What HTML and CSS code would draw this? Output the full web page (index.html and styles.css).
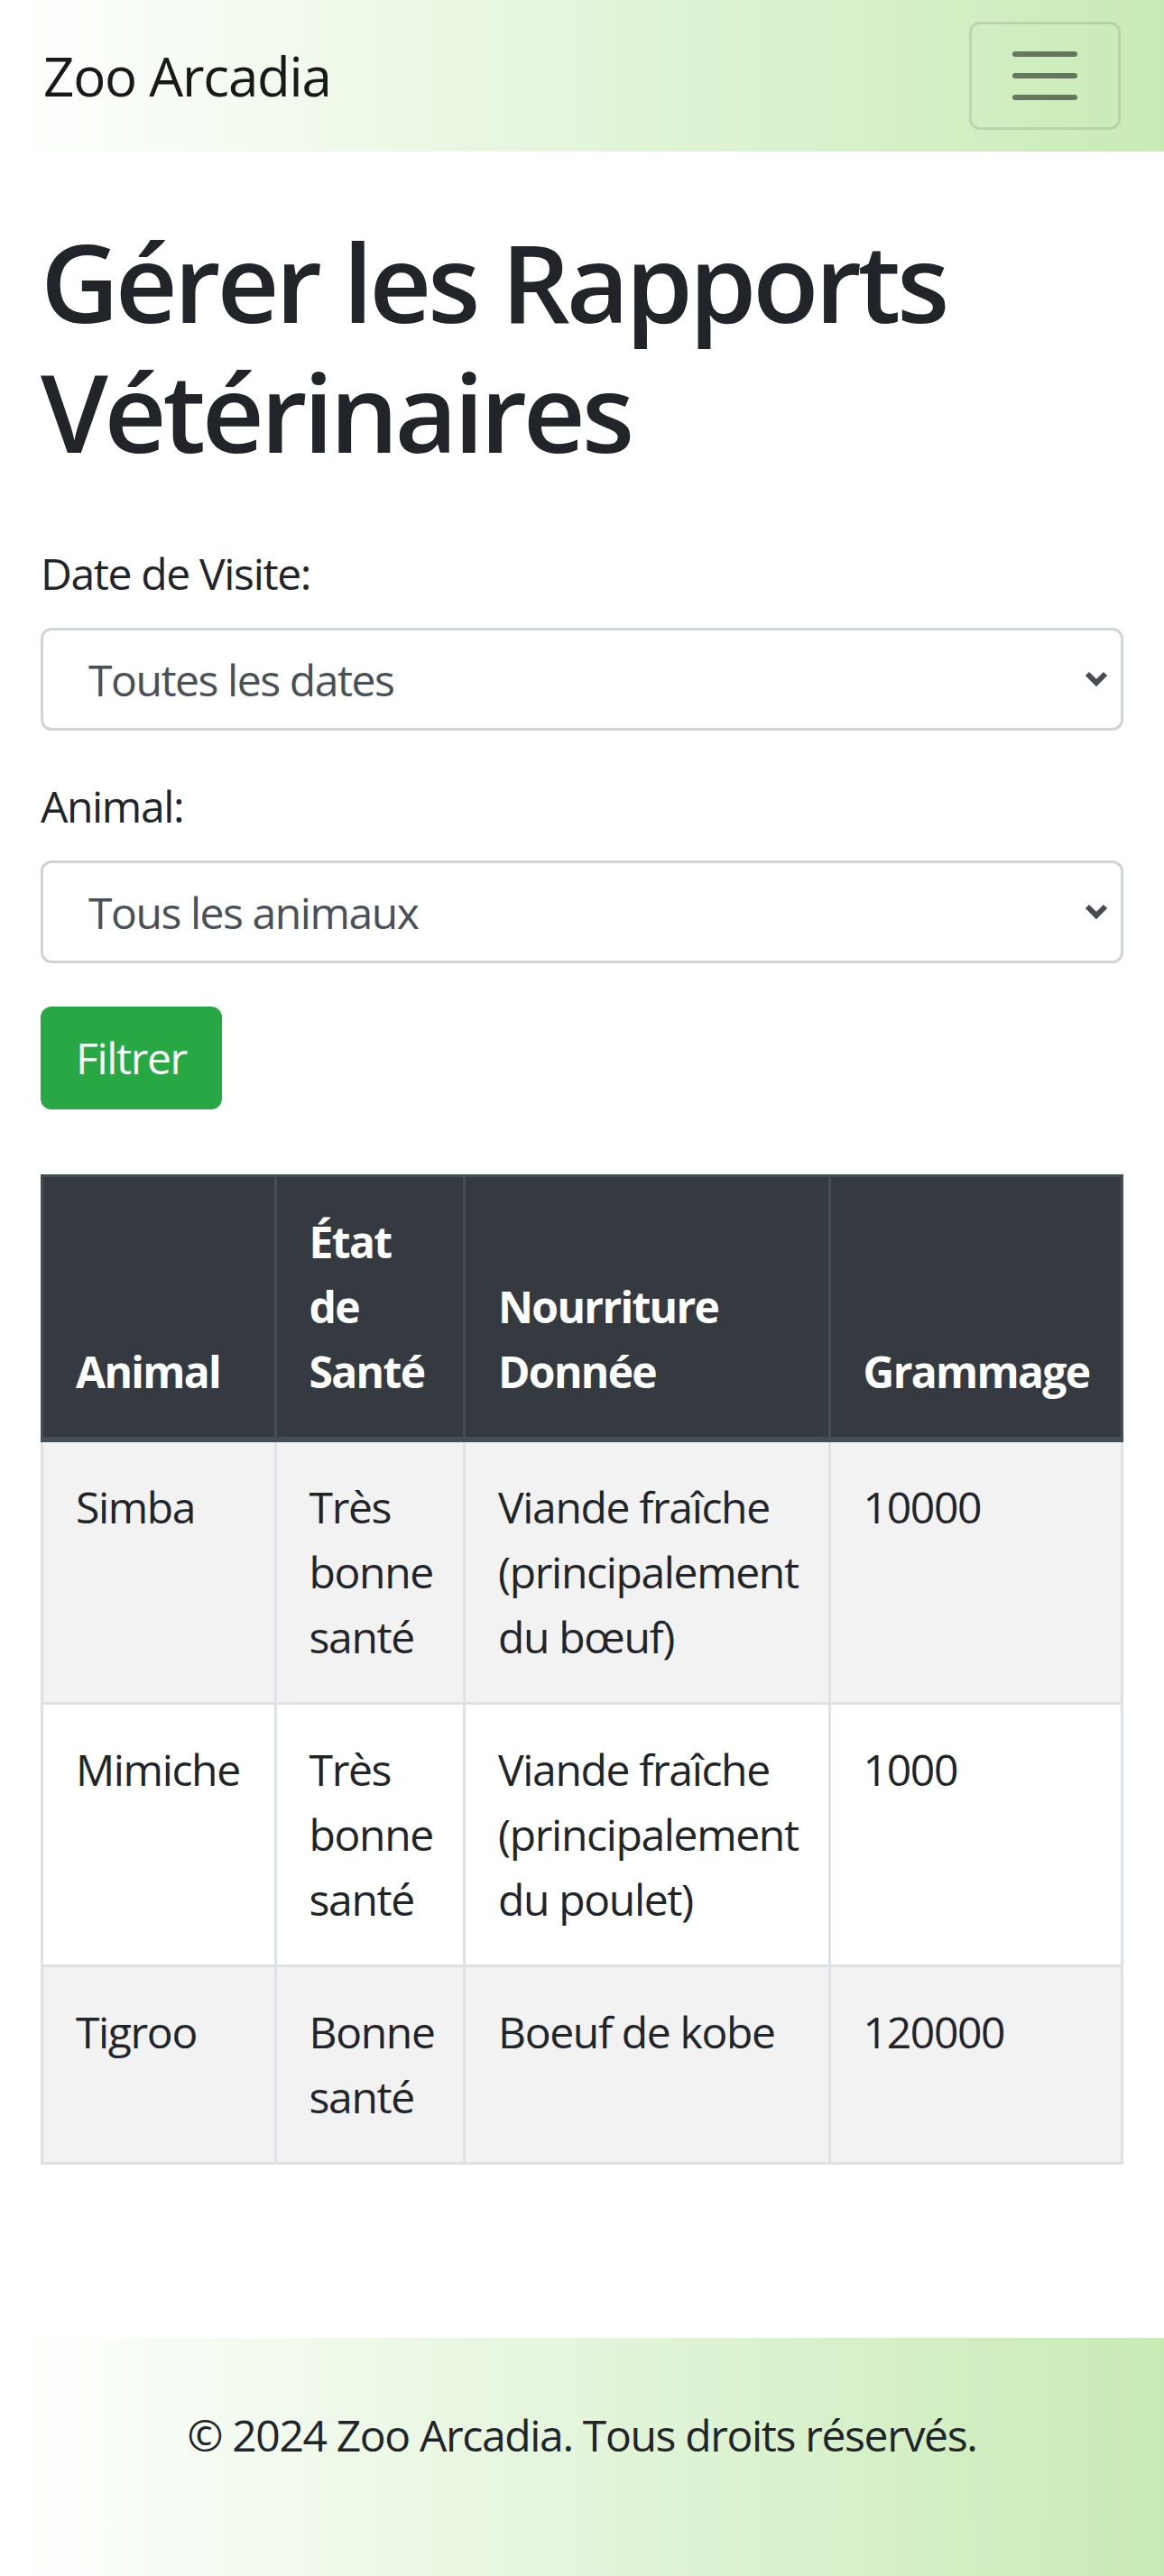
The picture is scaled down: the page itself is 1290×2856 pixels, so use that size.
FILE: index.html
```html
<!DOCTYPE html>
<html lang="fr">
<head>
<meta charset="utf-8">
<title>Gérer les Rapports Vétérinaires - Zoo Arcadia</title>
<link rel="stylesheet" href="styles.css">
</head>
<body>
<nav class="navbar">
  <span class="brand">Zoo Arcadia</span>
  <button class="toggler" type="button" aria-label="Menu">
    <svg class="toggler-icon" viewBox="0 0 30 30" width="90" height="90"><path d="M4 7h22M4 15h22M4 23h22" stroke="rgba(0,0,0,0.5)" stroke-width="2" stroke-linecap="round" fill="none"/></svg>
  </button>
</nav>
<main class="container">
  <h1 class="title">Gérer les Rapports Vétérinaires</h1>
  <form class="filters">
    <div class="form-group">
      <label class="label" for="date">Date de Visite:</label>
      <div class="select-wrap">
        <select id="date" class="select"><option>Toutes les dates</option></select>
        <svg class="chevron" viewBox="0 0 26 18" width="26" height="18"><path d="M3 3l10 10L23 3" stroke="#484c52" stroke-width="6" fill="none"/></svg>
      </div>
    </div>
    <div class="form-group">
      <label class="label" for="animal">Animal:</label>
      <div class="select-wrap">
        <select id="animal" class="select"><option>Tous les animaux</option></select>
        <svg class="chevron" viewBox="0 0 26 18" width="26" height="18"><path d="M3 3l10 10L23 3" stroke="#484c52" stroke-width="6" fill="none"/></svg>
      </div>
    </div>
    <button type="button" class="btn">Filtrer</button>
  </form>
  <table class="table">
    <colgroup>
      <col class="c1"><col class="c2"><col class="c3"><col class="c4">
    </colgroup>
    <thead>
      <tr><th>Animal</th><th>État de Santé</th><th>Nourriture Donnée</th><th>Grammage</th></tr>
    </thead>
    <tbody>
      <tr class="odd"><td>Simba</td><td>Très bonne santé</td><td>Viande fraîche (principalement du bœuf)</td><td>10000</td></tr>
      <tr><td>Mimiche</td><td>Très bonne santé</td><td>Viande fraîche (principalement du poulet)</td><td>1000</td></tr>
      <tr class="odd"><td>Tigroo</td><td>Bonne santé</td><td>Boeuf de kobe</td><td>120000</td></tr>
    </tbody>
  </table>
</main>
<footer class="footer">
  <p class="copy">© 2024 Zoo Arcadia. Tous droits réservés.</p>
</footer>
</body>
</html>
```
FILE: styles.css
```css
* { box-sizing: border-box; }
html, body { margin: 0; padding: 0; }
body {
  font-family: "Open Sans", "Noto Sans", sans-serif;
  font-size: 48px;
  line-height: 1.5;
  letter-spacing: -0.028em;
  color: #212529;
  background: #fff;
}
.navbar {
  display: flex;
  justify-content: space-between;
  align-items: center;
  padding: 24px 48px;
  background: linear-gradient(to right, #ffffff, #c8ebb6);
}
.brand {
  font-size: 60px;
  line-height: 90px;
  padding: 15px 0;
  letter-spacing: -0.02em;
  color: rgba(0,0,0,0.9);
}
.toggler {
  width: 168px;
  height: 120px;
  padding: 12px 36px;
  border: 3px solid rgba(0,0,0,0.1);
  border-radius: 12px;
  background: transparent;
  display: flex;
  align-items: center;
  justify-content: center;
}
.toggler-icon { display: block; }
.container {
  padding: 0 45px 192px;
  margin: 72px 0 0;
}
.title {
  margin: 0 0 72px;
  font-size: 120px;
  line-height: 1.2;
  font-weight: 600;
  letter-spacing: -0.035em;
}
.form-group { margin-bottom: 48px; }
.label {
  display: inline-block;
  margin-bottom: 24px;
}
.select-wrap { position: relative; }
.select {
  display: block;
  width: 100%;
  height: 114px;
  padding: 0 36px 0 50px;
  font-family: inherit;
  font-size: 48px;
  letter-spacing: -0.03em;
  color: #495057;
  background: #fff;
  border: 3px solid #ced4da;
  border-radius: 12px;
  -webkit-appearance: none;
  appearance: none;
}
.chevron {
  position: absolute;
  right: 17px;
  top: 48px;
}
.btn {
  display: inline-block;
  font-family: inherit;
  font-size: 48px;
  line-height: 72px;
  letter-spacing: -0.028em;
  padding: 18px 36px;
  color: #fff;
  background: #28a745;
  border: 3px solid #28a745;
  border-radius: 12px;
}
.table {
  width: 100%;
  margin-top: 72px;
  border-collapse: collapse;
  table-layout: fixed;
}
.c1 { width: 21.6%; }
.c2 { width: 17.5%; }
.c3 { width: 33.8%; }
.c4 { width: 27.1%; }
.table th, .table td {
  padding: 36px;
  border: 3px solid #dee2e6;
  text-align: left;
}
.table th {
  vertical-align: bottom;
  font-weight: 700;
  letter-spacing: -0.035em;
  color: #fff;
  background: #343a40;
  border-color: #454d55;
  border-bottom-width: 6px;
}
.table td { vertical-align: top; }
.table tr.odd td { background: #f2f2f2; }
.footer {
  padding: 72px 0;
  text-align: center;
  background: linear-gradient(to right, #ffffff, #c8ebb6);
}
.copy { margin: 0 0 48px; }
```
